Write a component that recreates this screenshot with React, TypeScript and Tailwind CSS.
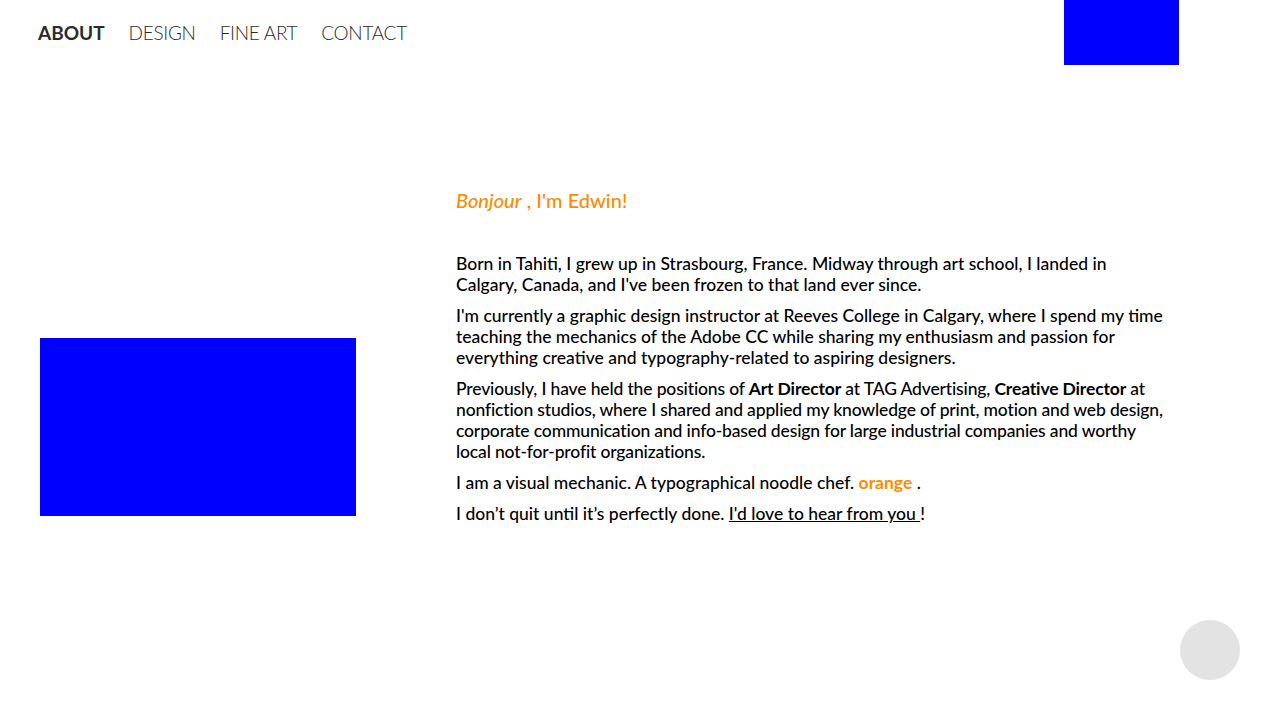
import React from "react";

const navItems = ["DESIGN", "FINE ART", "CONTACT"];

function Header() {
  return (
    <header className="flex items-start justify-between h-[65px]">
      <nav className="flex items-center gap-[24px] pl-[38px] pt-[20px] text-[19px] leading-[26px] text-[#2b2b2b]">
        <a className="font-bold">ABOUT</a>
        {navItems.map((item) => (
          <a key={item} className="font-light tracking-[-0.3px]">
            {item}
          </a>
        ))}
      </nav>
      <div className="w-[115px] h-[65px] bg-[#0000ff] mr-[101px]" />
    </header>
  );
}

function About() {
  return (
    <section className="flex pt-[122px]">
      <div className="w-[456px] shrink-0 pl-[40px] pt-[151px]">
        <div className="w-[316px] h-[178px] bg-[#0000ff]" />
      </div>
      <div className="w-[712px] text-[17.5px] leading-[21px] text-black font-medium">
        <h1 className="text-[20px] leading-[26px] text-[#ff8a00] mb-[40px]">
          <em>Bonjour</em> , I'm Edwin!
        </h1>
        <p className="mb-[10px]">
          Born in Tahiti, I grew up in Strasbourg, France. Midway through art school, I landed in
          Calgary, Canada, and I've been frozen to that land ever since.
        </p>
        <p className="mb-[10px]">
          I'm currently a graphic design instructor at Reeves College in Calgary, where I spend my time
          teaching the mechanics of the Adobe CC while sharing my enthusiasm and passion for
          everything creative and typography-related to aspiring designers.
        </p>
        <p className="mb-[10px] tracking-[-0.15px]">
          Previously, I have held the positions of <strong>Art Director</strong> at TAG Advertising,{" "}
          <strong>Creative Director</strong> at nonfiction studios, where I shared and applied my
          knowledge of print, motion and web design, corporate communication and info-based design for
          large industrial companies and worthy local not-for-profit organizations.
        </p>
        <p className="mb-[10px]">
          I am a visual mechanic. A typographical noodle chef.{" "}
          <strong className="text-[#ff8a00]">orange</strong> .
        </p>
        <p>
          I don’t quit until it’s perfectly done. <a className="underline">I'd love to hear from you </a>!
        </p>
      </div>
    </section>
  );
}

export default function App() {
  return (
    <div className="relative min-h-[720px] bg-white font-['Lato',sans-serif]">
      <Header />
      <About />
      <div className="fixed right-[40px] bottom-[40px] w-[60px] h-[60px] rounded-full bg-[#e3e3e3]" />
    </div>
  );
}
